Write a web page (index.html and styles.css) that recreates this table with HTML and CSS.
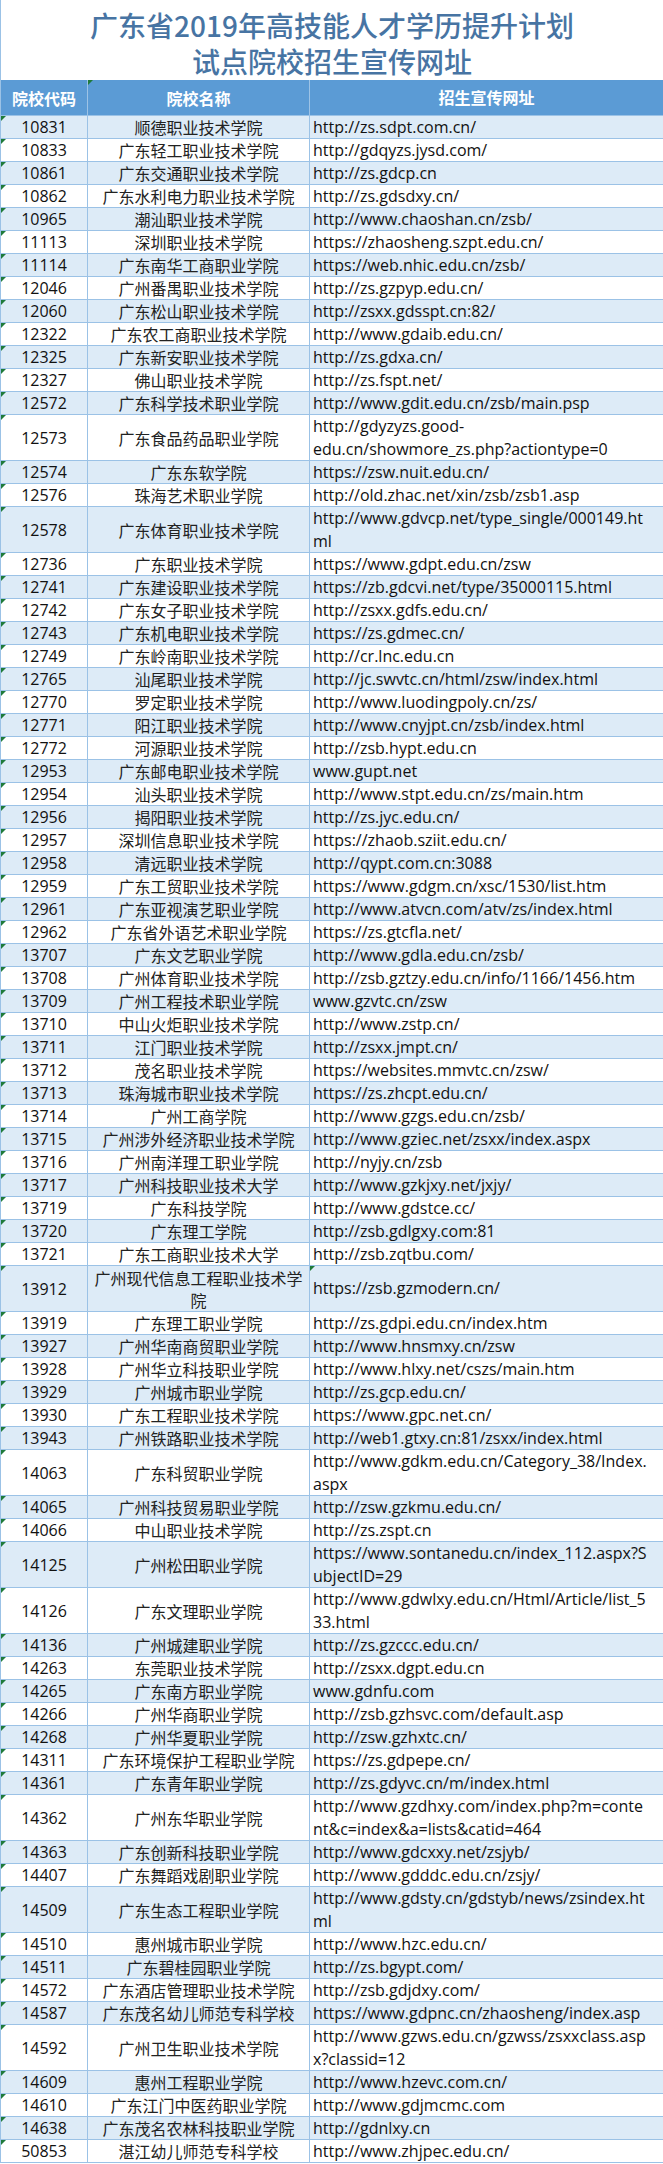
FILE: index.html
```html
<!DOCTYPE html>
<html lang="zh-CN">
<head>
<meta charset="utf-8">
<title>广东省2019年高技能人才学历提升计划试点院校招生宣传网址</title>
<link rel="stylesheet" href="styles.css">
</head>
<body>
<div class="sheet">
  <div class="title">
    <div class="title-line">广东省2019年高技能人才学历提升计划</div>
    <div class="title-line">试点院校招生宣传网址</div>
  </div>
  <div class="row head">
    <div class="c code">院校代码</div>
    <div class="c name mark">院校名称</div>
    <div class="c url hurl">招生宣传网址</div>
  </div>
  <div class="rows">
    <div class="row"><div class="c code mark">10831</div><div class="c name">顺德职业技术学院</div><div class="c url">http://zs.sdpt.com.cn/</div></div>
    <div class="row"><div class="c code mark">10833</div><div class="c name">广东轻工职业技术学院</div><div class="c url">http://gdqyzs.jysd.com/</div></div>
    <div class="row"><div class="c code mark">10861</div><div class="c name">广东交通职业技术学院</div><div class="c url">http://zs.gdcp.cn</div></div>
    <div class="row"><div class="c code mark">10862</div><div class="c name">广东水利电力职业技术学院</div><div class="c url">http://zs.gdsdxy.cn/</div></div>
    <div class="row"><div class="c code mark">10965</div><div class="c name">潮汕职业技术学院</div><div class="c url">http://www.chaoshan.cn/zsb/</div></div>
    <div class="row"><div class="c code mark">11113</div><div class="c name">深圳职业技术学院</div><div class="c url">https://zhaosheng.szpt.edu.cn/</div></div>
    <div class="row"><div class="c code mark">11114</div><div class="c name">广东南华工商职业学院</div><div class="c url">https://web.nhic.edu.cn/zsb/</div></div>
    <div class="row"><div class="c code mark">12046</div><div class="c name">广州番禺职业技术学院</div><div class="c url">http://zs.gzpyp.edu.cn/</div></div>
    <div class="row"><div class="c code mark">12060</div><div class="c name">广东松山职业技术学院</div><div class="c url">http://zsxx.gdsspt.cn:82/</div></div>
    <div class="row"><div class="c code mark">12322</div><div class="c name">广东农工商职业技术学院</div><div class="c url">http://www.gdaib.edu.cn/</div></div>
    <div class="row"><div class="c code mark">12325</div><div class="c name">广东新安职业技术学院</div><div class="c url">http://zs.gdxa.cn/</div></div>
    <div class="row"><div class="c code mark">12327</div><div class="c name">佛山职业技术学院</div><div class="c url">http://zs.fspt.net/</div></div>
    <div class="row"><div class="c code mark">12572</div><div class="c name">广东科学技术职业学院</div><div class="c url">http://www.gdit.edu.cn/zsb/main.psp</div></div>
    <div class="row tall"><div class="c code mark">12573</div><div class="c name">广东食品药品职业学院</div><div class="c url">http://gdyzyzs.good-<br>edu.cn/showmore_zs.php?actiontype=0</div></div>
    <div class="row"><div class="c code mark">12574</div><div class="c name">广东东软学院</div><div class="c url">https://zsw.nuit.edu.cn/</div></div>
    <div class="row"><div class="c code mark">12576</div><div class="c name">珠海艺术职业学院</div><div class="c url">http://old.zhac.net/xin/zsb/zsb1.asp</div></div>
    <div class="row tall"><div class="c code mark">12578</div><div class="c name">广东体育职业技术学院</div><div class="c url">http://www.gdvcp.net/type_single/000149.ht<br>ml</div></div>
    <div class="row"><div class="c code mark">12736</div><div class="c name">广东职业技术学院</div><div class="c url">https://www.gdpt.edu.cn/zsw</div></div>
    <div class="row"><div class="c code mark">12741</div><div class="c name">广东建设职业技术学院</div><div class="c url">https://zb.gdcvi.net/type/35000115.html</div></div>
    <div class="row"><div class="c code mark">12742</div><div class="c name">广东女子职业技术学院</div><div class="c url">http://zsxx.gdfs.edu.cn/</div></div>
    <div class="row"><div class="c code mark">12743</div><div class="c name">广东机电职业技术学院</div><div class="c url">https://zs.gdmec.cn/</div></div>
    <div class="row"><div class="c code mark">12749</div><div class="c name">广东岭南职业技术学院</div><div class="c url">http://cr.lnc.edu.cn</div></div>
    <div class="row"><div class="c code mark">12765</div><div class="c name">汕尾职业技术学院</div><div class="c url">http://jc.swvtc.cn/html/zsw/index.html</div></div>
    <div class="row"><div class="c code mark">12770</div><div class="c name">罗定职业技术学院</div><div class="c url">http://www.luodingpoly.cn/zs/</div></div>
    <div class="row"><div class="c code mark">12771</div><div class="c name">阳江职业技术学院</div><div class="c url">http://www.cnyjpt.cn/zsb/index.html</div></div>
    <div class="row"><div class="c code mark">12772</div><div class="c name">河源职业技术学院</div><div class="c url">http://zsb.hypt.edu.cn</div></div>
    <div class="row"><div class="c code mark">12953</div><div class="c name">广东邮电职业技术学院</div><div class="c url">www.gupt.net</div></div>
    <div class="row"><div class="c code mark">12954</div><div class="c name">汕头职业技术学院</div><div class="c url">http://www.stpt.edu.cn/zs/main.htm</div></div>
    <div class="row"><div class="c code mark">12956</div><div class="c name">揭阳职业技术学院</div><div class="c url">http://zs.jyc.edu.cn/</div></div>
    <div class="row"><div class="c code mark">12957</div><div class="c name">深圳信息职业技术学院</div><div class="c url">https://zhaob.sziit.edu.cn/</div></div>
    <div class="row"><div class="c code mark">12958</div><div class="c name">清远职业技术学院</div><div class="c url">http://qypt.com.cn:3088</div></div>
    <div class="row"><div class="c code mark">12959</div><div class="c name">广东工贸职业技术学院</div><div class="c url">https://www.gdgm.cn/xsc/1530/list.htm</div></div>
    <div class="row"><div class="c code mark">12961</div><div class="c name">广东亚视演艺职业学院</div><div class="c url">http://www.atvcn.com/atv/zs/index.html</div></div>
    <div class="row"><div class="c code mark">12962</div><div class="c name">广东省外语艺术职业学院</div><div class="c url">https://zs.gtcfla.net/</div></div>
    <div class="row"><div class="c code mark">13707</div><div class="c name">广东文艺职业学院</div><div class="c url">http://www.gdla.edu.cn/zsb/</div></div>
    <div class="row"><div class="c code mark">13708</div><div class="c name">广州体育职业技术学院</div><div class="c url">http://zsb.gztzy.edu.cn/info/1166/1456.htm</div></div>
    <div class="row"><div class="c code mark">13709</div><div class="c name">广州工程技术职业学院</div><div class="c url">www.gzvtc.cn/zsw</div></div>
    <div class="row"><div class="c code mark">13710</div><div class="c name">中山火炬职业技术学院</div><div class="c url">http://www.zstp.cn/</div></div>
    <div class="row"><div class="c code mark">13711</div><div class="c name">江门职业技术学院</div><div class="c url">http://zsxx.jmpt.cn/</div></div>
    <div class="row"><div class="c code mark">13712</div><div class="c name">茂名职业技术学院</div><div class="c url">https://websites.mmvtc.cn/zsw/</div></div>
    <div class="row"><div class="c code mark">13713</div><div class="c name">珠海城市职业技术学院</div><div class="c url">https://zs.zhcpt.edu.cn/</div></div>
    <div class="row"><div class="c code mark">13714</div><div class="c name">广州工商学院</div><div class="c url">http://www.gzgs.edu.cn/zsb/</div></div>
    <div class="row"><div class="c code mark">13715</div><div class="c name">广州涉外经济职业技术学院</div><div class="c url">http://www.gziec.net/zsxx/index.aspx</div></div>
    <div class="row"><div class="c code mark">13716</div><div class="c name">广州南洋理工职业学院</div><div class="c url">http://nyjy.cn/zsb</div></div>
    <div class="row"><div class="c code mark">13717</div><div class="c name">广州科技职业技术大学</div><div class="c url">http://www.gzkjxy.net/jxjy/</div></div>
    <div class="row"><div class="c code mark">13719</div><div class="c name">广东科技学院</div><div class="c url">http://www.gdstce.cc/</div></div>
    <div class="row"><div class="c code mark">13720</div><div class="c name">广东理工学院</div><div class="c url">http://zsb.gdlgxy.com:81</div></div>
    <div class="row"><div class="c code mark">13721</div><div class="c name">广东工商职业技术大学</div><div class="c url">http://zsb.zqtbu.com/</div></div>
    <div class="row tall"><div class="c code mark">13912</div><div class="c name">广州现代信息工程职业技术学<br>院</div><div class="c url mark">https://zsb.gzmodern.cn/</div></div>
    <div class="row"><div class="c code mark">13919</div><div class="c name">广东理工职业学院</div><div class="c url">http://zs.gdpi.edu.cn/index.htm</div></div>
    <div class="row"><div class="c code mark">13927</div><div class="c name">广州华南商贸职业学院</div><div class="c url">http://www.hnsmxy.cn/zsw</div></div>
    <div class="row"><div class="c code mark">13928</div><div class="c name">广州华立科技职业学院</div><div class="c url">http://www.hlxy.net/cszs/main.htm</div></div>
    <div class="row"><div class="c code mark">13929</div><div class="c name">广州城市职业学院</div><div class="c url">http://zs.gcp.edu.cn/</div></div>
    <div class="row"><div class="c code mark">13930</div><div class="c name">广东工程职业技术学院</div><div class="c url">https://www.gpc.net.cn/</div></div>
    <div class="row"><div class="c code mark">13943</div><div class="c name">广州铁路职业技术学院</div><div class="c url">http://web1.gtxy.cn:81/zsxx/index.html</div></div>
    <div class="row tall"><div class="c code mark">14063</div><div class="c name">广东科贸职业学院</div><div class="c url">http://www.gdkm.edu.cn/Category_38/Index.<br>aspx</div></div>
    <div class="row"><div class="c code mark">14065</div><div class="c name">广州科技贸易职业学院</div><div class="c url">http://zsw.gzkmu.edu.cn/</div></div>
    <div class="row"><div class="c code mark">14066</div><div class="c name">中山职业技术学院</div><div class="c url">http://zs.zspt.cn</div></div>
    <div class="row tall"><div class="c code mark">14125</div><div class="c name">广州松田职业学院</div><div class="c url">https://www.sontanedu.cn/index_112.aspx?S<br>ubjectID=29</div></div>
    <div class="row tall"><div class="c code mark">14126</div><div class="c name">广东文理职业学院</div><div class="c url">http://www.gdwlxy.edu.cn/Html/Article/list_5<br>33.html</div></div>
    <div class="row"><div class="c code mark">14136</div><div class="c name">广州城建职业学院</div><div class="c url">http://zs.gzccc.edu.cn/</div></div>
    <div class="row"><div class="c code mark">14263</div><div class="c name">东莞职业技术学院</div><div class="c url">http://zsxx.dgpt.edu.cn</div></div>
    <div class="row"><div class="c code mark">14265</div><div class="c name">广东南方职业学院</div><div class="c url">www.gdnfu.com</div></div>
    <div class="row"><div class="c code mark">14266</div><div class="c name">广州华商职业学院</div><div class="c url">http://zsb.gzhsvc.com/default.asp</div></div>
    <div class="row"><div class="c code mark">14268</div><div class="c name">广州华夏职业学院</div><div class="c url">http://zsw.gzhxtc.cn/</div></div>
    <div class="row"><div class="c code mark">14311</div><div class="c name">广东环境保护工程职业学院</div><div class="c url">https://zs.gdpepe.cn/</div></div>
    <div class="row"><div class="c code mark">14361</div><div class="c name">广东青年职业学院</div><div class="c url">http://zs.gdyvc.cn/m/index.html</div></div>
    <div class="row tall"><div class="c code mark">14362</div><div class="c name">广州东华职业学院</div><div class="c url">http://www.gzdhxy.com/index.php?m=conte<br>nt&amp;c=index&amp;a=lists&amp;catid=464</div></div>
    <div class="row"><div class="c code mark">14363</div><div class="c name">广东创新科技职业学院</div><div class="c url">http://www.gdcxxy.net/zsjyb/</div></div>
    <div class="row"><div class="c code mark">14407</div><div class="c name">广东舞蹈戏剧职业学院</div><div class="c url">http://www.gdddc.edu.cn/zsjy/</div></div>
    <div class="row tall"><div class="c code mark">14509</div><div class="c name">广东生态工程职业学院</div><div class="c url">http://www.gdsty.cn/gdstyb/news/zsindex.ht<br>ml</div></div>
    <div class="row"><div class="c code mark">14510</div><div class="c name">惠州城市职业学院</div><div class="c url">http://www.hzc.edu.cn/</div></div>
    <div class="row"><div class="c code mark">14511</div><div class="c name">广东碧桂园职业学院</div><div class="c url">http://zs.bgypt.com/</div></div>
    <div class="row"><div class="c code mark">14572</div><div class="c name">广东酒店管理职业技术学院</div><div class="c url">http://zsb.gdjdxy.com/</div></div>
    <div class="row"><div class="c code mark">14587</div><div class="c name">广东茂名幼儿师范专科学校</div><div class="c url">https://www.gdpnc.cn/zhaosheng/index.asp</div></div>
    <div class="row tall"><div class="c code mark">14592</div><div class="c name">广州卫生职业技术学院</div><div class="c url">http://www.gzws.edu.cn/gzwss/zsxxclass.asp<br>x?classid=12</div></div>
    <div class="row"><div class="c code mark">14609</div><div class="c name">惠州工程职业学院</div><div class="c url">http://www.hzevc.com.cn/</div></div>
    <div class="row"><div class="c code mark">14610</div><div class="c name">广东江门中医药职业学院</div><div class="c url">http://www.gdjmcmc.com</div></div>
    <div class="row"><div class="c code mark">14638</div><div class="c name">广东茂名农林科技职业学院</div><div class="c url">http://gdnlxy.cn</div></div>
    <div class="row"><div class="c code mark">50853</div><div class="c name">湛江幼儿师范专科学校</div><div class="c url">http://www.zhjpec.edu.cn/</div></div>
  </div>
</div>
</body>
</html>
```

FILE: styles.css
```css
html, body {
  margin: 0;
  padding: 0;
  background: #ffffff;
}

.sheet {
  width: 663px;
  box-sizing: border-box;
  border-left: 1px solid #9bc2e6;
  font-family: "Open Sans", "Noto Sans CJK SC", sans-serif;
  color: #111111;
}

.title {
  height: 80px;
  box-sizing: border-box;
  padding-top: 7px;
  display: flex;
  flex-direction: column;
  align-items: center;
  font-family: "Noto Sans CJK SC", sans-serif;
  font-weight: 500;
  font-size: 28px;
  line-height: 36px;
  color: #4774a3;
}

.row {
  display: grid;
  grid-template-columns: 87px 222px 1fr;
  height: 23px;
  box-sizing: border-box;
  border-bottom: 1px solid #9bc2e6;
}

.row.tall {
  height: 46px;
}

.rows .row:nth-child(odd) {
  background: #ddebf7;
}

.c {
  position: relative;
  display: flex;
  align-items: center;
  box-sizing: border-box;
  border-right: 1px solid #9bc2e6;
  white-space: nowrap;
  overflow: hidden;
}

.c.url {
  border-right: 0;
}

.code {
  justify-content: center;
  font-size: 16px;
  line-height: 22px;
}

.name {
  justify-content: center;
  text-align: center;
  font-family: "Noto Sans CJK SC", sans-serif;
  font-size: 16px;
  line-height: 22px;
  color: #222222;
}

.url {
  padding-left: 3px;
  font-size: 16px;
  line-height: 23px;
}

.head {
  height: 36px;
  background: #5b9bd5;
  border-bottom: 1px solid #9bc2e6;
}

.head .c {
  color: #ffffff;
  font-family: "Noto Sans CJK SC", sans-serif;
  font-weight: 700;
  font-size: 16px;
  border-right-color: #9dc3e6;
}

.head .hurl {
  justify-content: center;
  padding-left: 0;
}

.mark::before {
  content: "";
  position: absolute;
  top: 0;
  left: 0;
  width: 0;
  height: 0;
  border-top: 5px solid #1f7a3a;
  border-right: 5px solid transparent;
}
```
